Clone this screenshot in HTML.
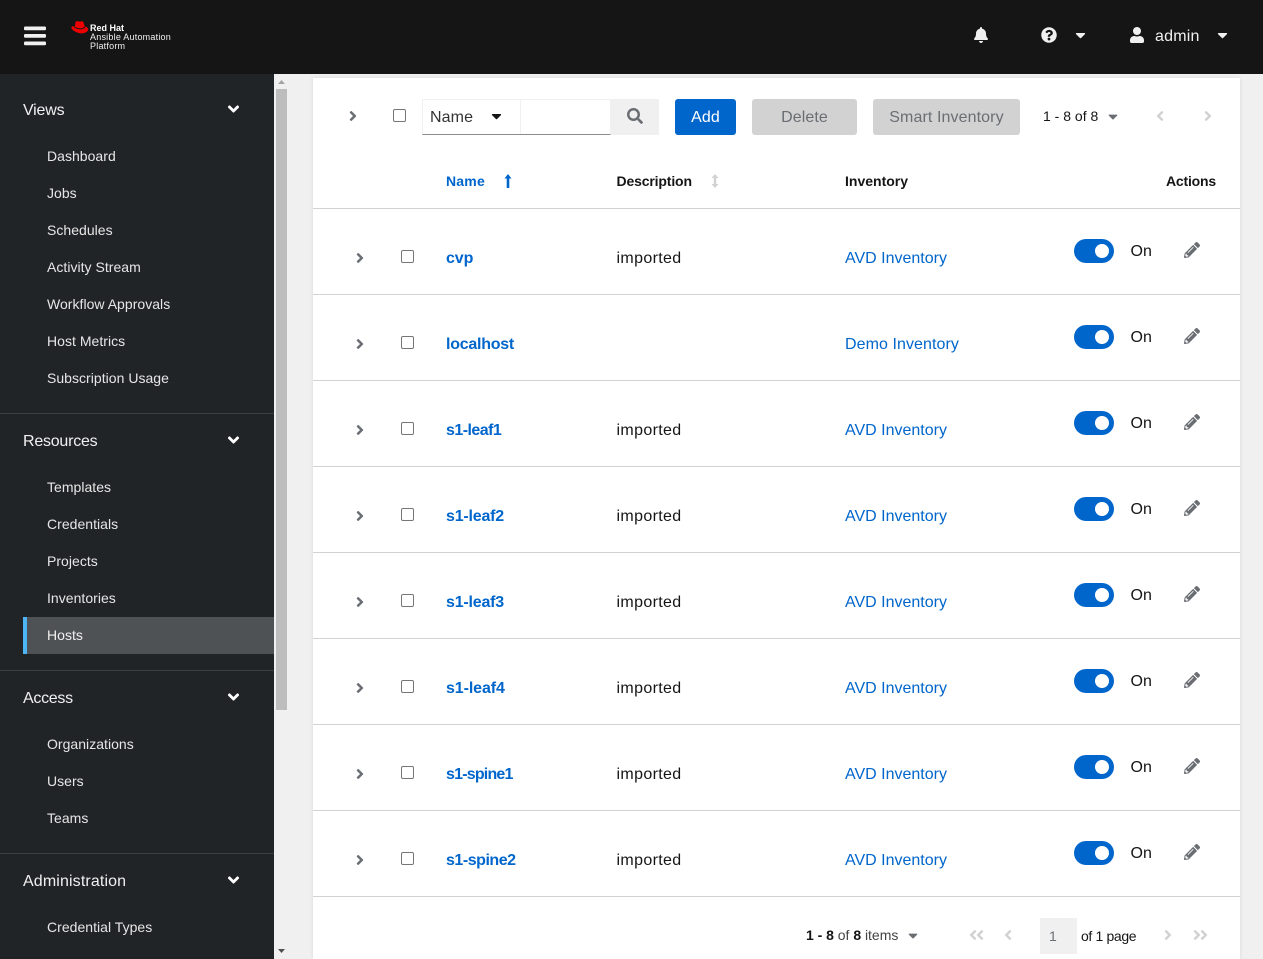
<!DOCTYPE html>
<html><head><meta charset="utf-8"><title>Hosts</title>
<style>
*{box-sizing:border-box}
html,body{margin:0;padding:0;width:1263px;height:959px;overflow:hidden;background:#f0f0f0;font-family:"Liberation Sans",sans-serif;color:#151515}
.a{position:absolute;white-space:nowrap}
svg{position:absolute;display:block}
#hd{position:absolute;left:0;top:0;width:1263px;height:74px;background:#151515}
#sb{position:absolute;left:0;top:74px;width:274px;height:885px;background:#212427}
.g{position:absolute;left:23px;color:#f0f0f0;font-size:16px;line-height:20px;letter-spacing:-.1px}
.i{position:absolute;left:47px;color:#e6e6e6;font-size:14px;line-height:18px;letter-spacing:.03px}
.d{position:absolute;left:0;width:274px;height:1px;background:#3c3f42}
#card{position:absolute;left:313px;top:78px;width:927px;height:881px;background:#fff;box-shadow:0 0 4px rgba(3,3,3,.1)}
.row{position:absolute;left:313px;width:927px;height:86px;border-bottom:1px solid #d2d2d2}
.row .a{line-height:20px}
.cb{position:absolute;width:13px;height:13px;background:#fff;border:1px solid #767676;border-radius:2px}
.n{left:133px;top:40px;font-size:16px;font-weight:bold;color:#06c}
.de{left:303.500px;top:40px;font-size:16px;color:#151515;letter-spacing:.35px}
.inv{left:532px;top:40px;font-size:16px;color:#06c;letter-spacing:0}
.tg{position:absolute;left:761px;top:30px;width:40px;height:24px;border-radius:12px;background:#06c}
.tg i{position:absolute;left:21px;top:5px;width:14px;height:14px;border-radius:50%;background:#fff}
.on{left:817.500px;top:33px;font-size:16px;color:#151515;letter-spacing:0}
.th{font-size:14px;font-weight:bold;line-height:18px;top:172px}
.btn{position:absolute;top:99px;height:36px;border-radius:3px;font-size:16px;line-height:38px;text-align:center;letter-spacing:.1px}
</style></head><body>
<svg width="0" height="0" style="position:absolute"><defs>
<symbol id="r" viewBox="0 0 256 512"><path d="M224.3 273l-136 136c-9.4 9.4-24.6 9.4-33.9 0l-22.6-22.6c-9.4-9.4-9.4-24.6 0-33.9l96.4-96.4-96.4-96.4c-9.4-9.4-9.4-24.6 0-33.9L54.3 103c9.4-9.4 24.6-9.4 33.9 0l136 136c9.5 9.4 9.5 24.6.1 34z"/></symbol>
<symbol id="l" viewBox="0 0 256 512"><path d="M31.7 239l136-136c9.4-9.4 24.6-9.4 33.9 0l22.6 22.6c9.4 9.4 9.4 24.6 0 33.9L127.9 256l96.4 96.4c9.4 9.4 9.4 24.6 0 33.9L201.7 409c-9.4 9.4-24.6 9.4-33.9 0l-136-136c-9.5-9.4-9.5-24.6-.1-34z"/></symbol>
<symbol id="dn" viewBox="0 0 320 512"><path d="M143 352.3L7 216.3c-9.4-9.4-9.4-24.6 0-33.9l22.6-22.6c9.4-9.4 24.6-9.4 33.9 0l96.4 96.4 96.4-96.4c9.4-9.4 24.6-9.4 33.9 0l22.6 22.6c9.4 9.4 9.4 24.6 0 33.9l-136 136c-9.2 9.4-24.4 9.4-33.8 0z"/></symbol>
<symbol id="cd" viewBox="0 0 320 512"><path d="M31.3 192h257.3c17.8 0 26.7 21.5 14.1 34.1L174.1 354.8c-7.8 7.8-20.5 7.8-28.3 0L17.2 226.1C4.6 213.5 13.5 192 31.3 192z"/></symbol>
<symbol id="p" viewBox="0 0 512 512"><path d="M497.9 142.1l-46.1 46.1c-4.7 4.7-12.3 4.7-17 0l-111-111c-4.7-4.7-4.7-12.3 0-17l46.1-46.1c18.7-18.7 49.1-18.7 67.9 0l60.1 60.1c18.8 18.7 18.8 49.1 0 67.9zM284.2 99.8L21.6 362.4.4 483.9c-2.9 16.4 11.4 30.6 27.8 27.8l121.5-21.3 262.6-262.6c4.7-4.7 4.7-12.3 0-17l-111-111c-4.8-4.7-12.4-4.7-17.1 0zM124.1 339.9c-5.5-5.5-5.5-14.3 0-19.8l154-154c5.5-5.5 14.3-5.5 19.8 0s5.5 14.3 0 19.8l-154 154c-5.5 5.5-14.3 5.500-19.8 0zM88 424h48v36l-64.5 11.3-31.1-31.1L51.7 376H88v48z"/></symbol>
</defs></svg>

<div id="hd">
<svg style="left:24px;top:26px" width="23" height="20" viewBox="0 0 23 20" fill="#f0f0f0"><rect width="22" height="3.800" y=".5" rx="1.200"/><rect width="22" height="3.800" y="8" rx="1.200"/><rect width="22" height="3.800" y="15.500" rx="1.200"/></svg>
<svg style="left:71px;top:20px" width="18" height="14" viewBox="0 0 18 14"><path fill="#e00" d="M4.500 2C5 .9 7.500 1.200 9 1.700 10.500 1 12 1 12.500 2.500L13.800 6.500C15.800 7.100 17.300 8 17.300 9.300 17.300 11 15 12.800 12 13.300 7 14 .3 10 .3 7.500 .3 6.800 1 6.300 2 6L4 6z"/><path fill="none" stroke="#151515" stroke-width=".9" d="M2.500 6C5 9 11 10 14 7"/></svg>
<div class="a" style="left:90px;top:23px;font-size:9px;line-height:10px;font-weight:bold;color:#fff">Red Hat</div>
<div class="a" style="left:90px;top:32px;font-size:9px;line-height:10px;color:#f0f0f0;letter-spacing:.22px">Ansible Automation</div>
<div class="a" style="left:90px;top:41px;font-size:9px;line-height:10px;color:#f0f0f0;letter-spacing:.22px">Platform</div>
<svg style="left:974px;top:27px" width="14" height="16" viewBox="0 0 448 512" fill="#f0f0f0"><path d="M224 512c35.32 0 63.97-28.65 63.97-64H160.03c0 35.35 28.65 64 63.97 64zm215.39-149.71c-19.32-20.76-55.47-51.99-55.47-154.29 0-77.7-54.48-139.9-127.94-155.16V32c0-17.67-14.32-32-31.98-32s-31.98 14.33-31.98 32v20.84C118.56 68.1 64.08 130.3 64.08 208c0 102.3-36.15 133.53-55.47 154.29-6 6.45-8.66 14.16-8.61 21.71.11 16.4 12.98 32 32.1 32h383.8c19.12 0 32-15.6 32.1-32 .05-7.55-2.61-15.27-8.61-21.71z"/></svg>
<svg style="left:1041px;top:27px" width="16" height="16" viewBox="0 0 512 512" fill="#f0f0f0"><path d="M504 256c0 136.997-111.043 248-248 248S8 392.997 8 256C8 119.083 119.043 8 256 8s248 111.083 248 248zM262.655 90c-54.497 0-89.255 22.957-116.549 63.758-3.536 5.286-2.353 12.415 2.715 16.258l34.699 26.31c5.205 3.947 12.621 3.008 16.665-2.122 17.864-22.658 30.113-35.797 57.303-35.797 20.429 0 45.698 13.148 45.698 32.958 0 14.976-12.363 22.667-32.534 33.976C247.128 238.528 216 254.941 216 296v4c0 6.627 5.373 12 12 12h56c6.627 0 12-5.373 12-12v-1.333c0-28.462 83.186-29.647 83.186-106.667 0-58.002-60.165-102-116.531-102zM256 338c-25.365 0-46 20.635-46 46 0 25.364 20.635 46 46 46s46-20.636 46-46c0-25.365-20.635-46-46-46z"/></svg>
<svg style="left:1075px;top:27px" width="11" height="16" viewBox="0 0 320 512" fill="#f0f0f0"><use href="#cd"/></svg>
<svg style="left:1130px;top:27px" width="14" height="16" viewBox="0 0 448 512" fill="#f0f0f0"><path d="M224 256c70.7 0 128-57.3 128-128S294.7 0 224 0 96 57.3 96 128s57.3 128 128 128zm89.6 32h-16.7c-22.2 10.2-46.9 16-72.9 16s-50.6-5.8-72.9-16h-16.7C60.2 288 0 348.2 0 422.4V464c0 26.5 21.5 48 48 48h352c26.5 0 48-21.5 48-48v-41.6c0-74.2-60.2-134.4-134.4-134.4z"/></svg>
<div class="a" style="left:1155px;top:27px;font-size:16px;line-height:20px;color:#f0f0f0;letter-spacing:.2px">admin</div>
<svg style="left:1217px;top:27px" width="11" height="16" viewBox="0 0 320 512" fill="#f0f0f0"><use href="#cd"/></svg>
</div>

<div id="sb">
<div class="g" style="top:27px;letter-spacing:-.2px">Views</div>
<svg style="left:227px;top:26px" width="13" height="18" viewBox="0 0 320 512" fill="#fff"><use href="#dn"/></svg>
<div class="i" style="top:73px">Dashboard</div>
<div class="i" style="top:110px">Jobs</div>
<div class="i" style="top:147px">Schedules</div>
<div class="i" style="top:184px">Activity Stream</div>
<div class="i" style="top:221px">Workflow Approvals</div>
<div class="i" style="top:258px">Host Metrics</div>
<div class="i" style="top:295px">Subscription Usage</div>
<div class="d" style="top:339px"></div>
<div class="g" style="top:358px;letter-spacing:-.23px">Resources</div>
<svg style="left:227px;top:357px" width="13" height="18" viewBox="0 0 320 512" fill="#fff"><use href="#dn"/></svg>
<div class="i" style="top:404px">Templates</div>
<div class="i" style="top:441px">Credentials</div>
<div class="i" style="top:478px">Projects</div>
<div class="i" style="top:515px">Inventories</div>
<div style="position:absolute;left:23px;top:543px;width:251px;height:37px;background:#4f5255;border-left:4px solid #4db5f5"></div>
<div class="i" style="top:552px;color:#f0f0f0">Hosts</div>
<div class="d" style="top:596px"></div>
<div class="g" style="top:615px;letter-spacing:-.3px">Access</div>
<svg style="left:227px;top:614px" width="13" height="18" viewBox="0 0 320 512" fill="#fff"><use href="#dn"/></svg>
<div class="i" style="top:661px">Organizations</div>
<div class="i" style="top:698px">Users</div>
<div class="i" style="top:735px">Teams</div>
<div class="d" style="top:779px"></div>
<div class="g" style="top:798px;letter-spacing:.13px">Administration</div>
<svg style="left:227px;top:797px" width="13" height="18" viewBox="0 0 320 512" fill="#fff"><use href="#dn"/></svg>
<div class="i" style="top:844px">Credential Types</div>
</div>

<div style="position:absolute;left:276px;top:89px;width:11px;height:621px;background:#bdbdbd"></div>
<svg style="left:277px;top:79px" width="9" height="6" viewBox="0 0 9 6" fill="#a3a3a3"><path d="M4.500 1L8 5H1z"/></svg>
<svg style="left:277px;top:948px" width="9" height="6" viewBox="0 0 9 6" fill="#505050"><path d="M4.500 5L8 1H1z"/></svg>

<div id="card"></div>

<svg style="left:349px;top:108px" width="8" height="16" viewBox="0 0 256 512" fill="#6a6e73"><use href="#r"/></svg>
<div class="cb" style="left:393px;top:109px"></div>
<div style="position:absolute;left:422px;top:99px;width:189px;height:36px;border:1px solid #f0f0f0;border-bottom:1px solid #8a8d90"></div>
<div style="position:absolute;left:520px;top:99px;width:1px;height:35px;background:#f0f0f0"></div>
<div class="a" style="left:430px;top:108px;font-size:16px;line-height:20px;letter-spacing:.1px;color:#333">Name</div>
<svg style="left:491px;top:108px" width="11" height="16" viewBox="0 0 320 512" fill="#151515"><use href="#cd"/></svg>
<div style="position:absolute;left:611px;top:99px;width:48px;height:36px;background:#f0f0f0"></div>
<svg style="left:627px;top:108px" width="16" height="16" viewBox="0 0 512 512" fill="#6a6e73"><path d="M505 442.700L405.300 343c-4.500-4.500-10.600-7-17-7H372c27.600-35.300 44-79.700 44-128C416 93.100 322.900 0 208 0S0 93.100 0 208s93.100 208 208 208c48.300 0 92.700-16.400 128-44v16.300c0 6.400 2.500 12.500 7 17l99.700 99.700c9.400 9.400 24.600 9.400 33.900 0l28.300-28.300c9.400-9.400 9.400-24.600.1-34zM208 336c-70.700 0-128-57.200-128-128 0-70.700 57.200-128 128-128 70.700 0 128 57.200 128 128 0 70.700-57.200 128-128 128z"/></svg>
<div class="btn" style="left:675px;width:61px;background:#06c;color:#fff">Add</div>
<div class="btn" style="left:752px;width:105px;background:#d2d2d2;color:#6a6e73">Delete</div>
<div class="btn" style="left:873px;width:147px;background:#d2d2d2;color:#6a6e73">Smart Inventory</div>
<div class="a" style="left:1043px;top:107px;font-size:14px;line-height:18px;color:#151515;letter-spacing:0">1 - 8 of 8</div>
<svg style="left:1108px;top:109px" width="10" height="15" viewBox="0 0 320 512" fill="#6a6e73"><use href="#cd"/></svg>
<svg style="left:1156px;top:108px" width="8" height="16" viewBox="0 0 256 512" fill="#d2d2d2"><use href="#l"/></svg>
<svg style="left:1204px;top:108px" width="8" height="16" viewBox="0 0 256 512" fill="#d2d2d2"><use href="#r"/></svg>

<div class="a th" style="left:446px;color:#06c;letter-spacing:.2px">Name</div>
<svg style="left:504px;top:174px" width="8" height="14" viewBox="0 0 8 14" fill="#06c"><path d="M4 0L7.500 4.500H5.300V14H2.700V4.500H.5z"/></svg>
<div class="a th" style="left:616.500px;letter-spacing:-.15px">Description</div>
<svg style="left:711px;top:174px" width="8" height="14" viewBox="0 0 8 14" fill="#d2d2d2"><path d="M4 0L7.500 4H5.200V10H7.500L4 14 .5 10H2.800V4H.5z"/></svg>
<div class="a th" style="left:845px;letter-spacing:0">Inventory</div>
<div class="a th" style="left:1166px;letter-spacing:-.2px">Actions</div>
<div style="position:absolute;left:313px;top:208px;width:927px;height:1px;background:#d2d2d2"></div>

<div class="row" style="top:209px"><svg style="left:43px;top:41px" width="8" height="16" viewBox="0 0 256 512" fill="#6a6e73"><use href="#r"/></svg><div class="cb" style="left:88px;top:41px"></div><div class="a n" style="letter-spacing:-.1px">cvp</div><div class="a de">imported</div><div class="a inv">AVD Inventory</div><div class="tg"><i></i></div><div class="a on">On</div><svg style="left:871px;top:33px" width="16" height="16" viewBox="0 0 512 512" fill="#6a6e73"><use href="#p"/></svg></div>
<div class="row" style="top:295px"><svg style="left:43px;top:41px" width="8" height="16" viewBox="0 0 256 512" fill="#6a6e73"><use href="#r"/></svg><div class="cb" style="left:88px;top:41px"></div><div class="a n" style="letter-spacing:-.25px">localhost</div><div class="a inv" style="letter-spacing:.07px">Demo Inventory</div><div class="tg"><i></i></div><div class="a on">On</div><svg style="left:871px;top:33px" width="16" height="16" viewBox="0 0 512 512" fill="#6a6e73"><use href="#p"/></svg></div>
<div class="row" style="top:381px"><svg style="left:43px;top:41px" width="8" height="16" viewBox="0 0 256 512" fill="#6a6e73"><use href="#r"/></svg><div class="cb" style="left:88px;top:41px"></div><div class="a n" style="letter-spacing:-.55px">s1-leaf1</div><div class="a de">imported</div><div class="a inv">AVD Inventory</div><div class="tg"><i></i></div><div class="a on">On</div><svg style="left:871px;top:33px" width="16" height="16" viewBox="0 0 512 512" fill="#6a6e73"><use href="#p"/></svg></div>
<div class="row" style="top:467px"><svg style="left:43px;top:41px" width="8" height="16" viewBox="0 0 256 512" fill="#6a6e73"><use href="#r"/></svg><div class="cb" style="left:88px;top:41px"></div><div class="a n" style="letter-spacing:-.2px">s1-leaf2</div><div class="a de">imported</div><div class="a inv">AVD Inventory</div><div class="tg"><i></i></div><div class="a on">On</div><svg style="left:871px;top:33px" width="16" height="16" viewBox="0 0 512 512" fill="#6a6e73"><use href="#p"/></svg></div>
<div class="row" style="top:553px"><svg style="left:43px;top:41px" width="8" height="16" viewBox="0 0 256 512" fill="#6a6e73"><use href="#r"/></svg><div class="cb" style="left:88px;top:41px"></div><div class="a n" style="letter-spacing:-.2px">s1-leaf3</div><div class="a de">imported</div><div class="a inv">AVD Inventory</div><div class="tg"><i></i></div><div class="a on">On</div><svg style="left:871px;top:33px" width="16" height="16" viewBox="0 0 512 512" fill="#6a6e73"><use href="#p"/></svg></div>
<div class="row" style="top:639px"><svg style="left:43px;top:41px" width="8" height="16" viewBox="0 0 256 512" fill="#6a6e73"><use href="#r"/></svg><div class="cb" style="left:88px;top:41px"></div><div class="a n" style="letter-spacing:-.1px">s1-leaf4</div><div class="a de">imported</div><div class="a inv">AVD Inventory</div><div class="tg"><i></i></div><div class="a on">On</div><svg style="left:871px;top:33px" width="16" height="16" viewBox="0 0 512 512" fill="#6a6e73"><use href="#p"/></svg></div>
<div class="row" style="top:725px"><svg style="left:43px;top:41px" width="8" height="16" viewBox="0 0 256 512" fill="#6a6e73"><use href="#r"/></svg><div class="cb" style="left:88px;top:41px"></div><div class="a n" style="letter-spacing:-.8px">s1-spine1</div><div class="a de">imported</div><div class="a inv">AVD Inventory</div><div class="tg"><i></i></div><div class="a on">On</div><svg style="left:871px;top:33px" width="16" height="16" viewBox="0 0 512 512" fill="#6a6e73"><use href="#p"/></svg></div>
<div class="row" style="top:811px"><svg style="left:43px;top:41px" width="8" height="16" viewBox="0 0 256 512" fill="#6a6e73"><use href="#r"/></svg><div class="cb" style="left:88px;top:41px"></div><div class="a n" style="letter-spacing:-.47px">s1-spine2</div><div class="a de">imported</div><div class="a inv">AVD Inventory</div><div class="tg"><i></i></div><div class="a on">On</div><svg style="left:871px;top:33px" width="16" height="16" viewBox="0 0 512 512" fill="#6a6e73"><use href="#p"/></svg></div>

<div class="a" style="left:806px;top:926px;font-size:14px;line-height:18px;color:#444;letter-spacing:-.02px"><b style="color:#151515">1 - 8</b> of <b style="color:#151515">8</b> items</div>
<svg style="left:908px;top:928px" width="10" height="15" viewBox="0 0 320 512" fill="#6a6e73"><use href="#cd"/></svg>
<svg style="left:969px;top:927px" width="8" height="16" viewBox="0 0 256 512" fill="#d2d2d2"><use href="#l"/></svg>
<svg style="left:976px;top:927px" width="8" height="16" viewBox="0 0 256 512" fill="#d2d2d2"><use href="#l"/></svg>
<svg style="left:1004px;top:927px" width="8" height="16" viewBox="0 0 256 512" fill="#d2d2d2"><use href="#l"/></svg>
<div style="position:absolute;left:1040px;top:918px;width:37px;height:36px;background:#f0f0f0"></div>
<div class="a" style="left:1049px;top:927px;font-size:14px;line-height:18px;color:#6a6e73">1</div>
<div class="a" style="left:1081px;top:927px;font-size:14px;line-height:18px;color:#151515;letter-spacing:-.35px">of 1 page</div>
<svg style="left:1164px;top:927px" width="8" height="16" viewBox="0 0 256 512" fill="#d2d2d2"><use href="#r"/></svg>
<svg style="left:1193px;top:927px" width="8" height="16" viewBox="0 0 256 512" fill="#d2d2d2"><use href="#r"/></svg>
<svg style="left:1199.500px;top:927px" width="8" height="16" viewBox="0 0 256 512" fill="#d2d2d2"><use href="#r"/></svg>
</body></html>
